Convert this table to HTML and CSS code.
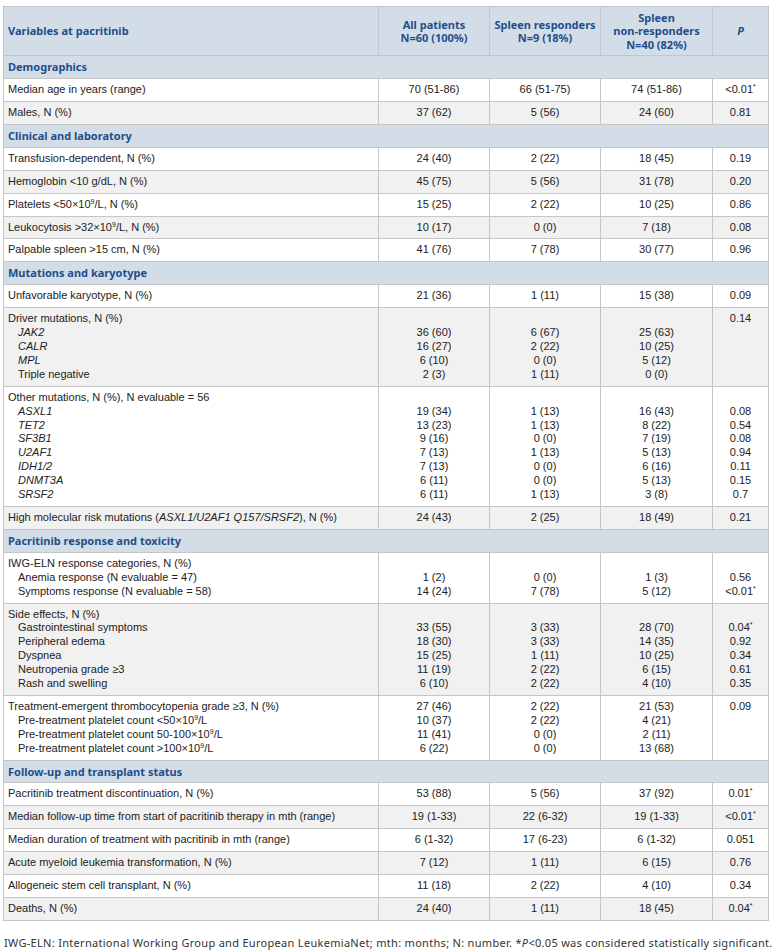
FILE: index.html
```html
<!DOCTYPE html>
<html>
<head>
<meta charset="utf-8">
<link rel="stylesheet" href="styles.css">
</head>
<body>
<div class="wrap">
<table class="tbl">
<colgroup>
<col class="c1"><col class="c2"><col class="c3"><col class="c4"><col class="c5">
</colgroup>
<thead>
<tr>
<th class="lft">Variables at pacritinib</th>
<th>All patients<br>N=60 (100%)</th>
<th>Spleen responders<br>N=9 (18%)</th>
<th>Spleen<br>non-responders<br>N=40 (82%)</th>
<th><i>P</i></th>
</tr>
</thead>
<tbody>
<tr class="sec"><td colspan="5">Demographics</td></tr>
<tr><td>Median age in years (range)</td><td>70 (51-86)</td><td>66 (51-75)</td><td>74 (51-86)</td><td>&lt;0.01<sup>*</sup></td></tr>
<tr><td>Males, N (%)</td><td>37 (62)</td><td>5 (56)</td><td>24 (60)</td><td>0.81</td></tr>
</tbody>
<tbody>
<tr class="sec"><td colspan="5">Clinical and laboratory</td></tr>
<tr><td>Transfusion-dependent, N (%)</td><td>24 (40)</td><td>2 (22)</td><td>18 (45)</td><td>0.19</td></tr>
<tr><td>Hemoglobin &lt;10 g/dL, N (%)</td><td>45 (75)</td><td>5 (56)</td><td>31 (78)</td><td>0.20</td></tr>
<tr><td>Platelets &lt;50×10<sup>9</sup>/L, N (%)</td><td>15 (25)</td><td>2 (22)</td><td>10 (25)</td><td>0.86</td></tr>
<tr><td>Leukocytosis &gt;32×10<sup>9</sup>/L, N (%)</td><td>10 (17)</td><td>0 (0)</td><td>7 (18)</td><td>0.08</td></tr>
<tr><td>Palpable spleen &gt;15 cm, N (%)</td><td>41 (76)</td><td>7 (78)</td><td>30 (77)</td><td>0.96</td></tr>
</tbody>
<tbody>
<tr class="sec"><td colspan="5">Mutations and karyotype</td></tr>
<tr><td>Unfavorable karyotype, N (%)</td><td>21 (36)</td><td>1 (11)</td><td>15 (38)</td><td>0.09</td></tr>
<tr class="multi"><td>Driver mutations, N (%)<br><span class="sub"><i>JAK2</i></span><br><span class="sub"><i>CALR</i></span><br><span class="sub"><i>MPL</i></span><br><span class="sub">Triple negative</span></td><td><br>36 (60)<br>16 (27)<br>6 (10)<br>2 (3)</td><td><br>6 (67)<br>2 (22)<br>0 (0)<br>1 (11)</td><td><br>25 (63)<br>10 (25)<br>5 (12)<br>0 (0)</td><td>0.14</td></tr>
<tr class="multi"><td>Other mutations, N (%), N evaluable = 56<br><span class="sub"><i>ASXL1</i></span><br><span class="sub"><i>TET2</i></span><br><span class="sub"><i>SF3B1</i></span><br><span class="sub"><i>U2AF1</i></span><br><span class="sub"><i>IDH1/2</i></span><br><span class="sub"><i>DNMT3A</i></span><br><span class="sub"><i>SRSF2</i></span></td><td><br>19 (34)<br>13 (23)<br>9 (16)<br>7 (13)<br>7 (13)<br>6 (11)<br>6 (11)</td><td><br>1 (13)<br>1 (13)<br>0 (0)<br>1 (13)<br>0 (0)<br>0 (0)<br>1 (13)</td><td><br>16 (43)<br>8 (22)<br>7 (19)<br>5 (13)<br>6 (16)<br>5 (13)<br>3 (8)</td><td><br>0.08<br>0.54<br>0.08<br>0.94<br>0.11<br>0.15<br>0.7</td></tr>
<tr><td>High molecular risk mutations (<i>ASXL1/U2AF1 Q157/SRSF2</i>), N (%)</td><td>24 (43)</td><td>2 (25)</td><td>18 (49)</td><td>0.21</td></tr>
</tbody>
<tbody>
<tr class="sec"><td colspan="5">Pacritinib response and toxicity</td></tr>
<tr class="multi"><td>IWG-ELN response categories, N (%)<br><span class="sub">Anemia response (N evaluable = 47)</span><br><span class="sub">Symptoms response (N evaluable = 58)</span></td><td><br>1 (2)<br>14 (24)</td><td><br>0 (0)<br>7 (78)</td><td><br>1 (3)<br>5 (12)</td><td><br>0.56<br>&lt;0.01<sup>*</sup></td></tr>
<tr class="multi"><td>Side effects, N (%)<br><span class="sub">Gastrointestinal symptoms</span><br><span class="sub">Peripheral edema</span><br><span class="sub">Dyspnea</span><br><span class="sub">Neutropenia grade ≥3</span><br><span class="sub">Rash and swelling</span></td><td><br>33 (55)<br>18 (30)<br>15 (25)<br>11 (19)<br>6 (10)</td><td><br>3 (33)<br>3 (33)<br>1 (11)<br>2 (22)<br>2 (22)</td><td><br>28 (70)<br>14 (35)<br>10 (25)<br>6 (15)<br>4 (10)</td><td><br>0.04<sup>*</sup><br>0.92<br>0.34<br>0.61<br>0.35</td></tr>
<tr class="multi"><td>Treatment-emergent thrombocytopenia grade ≥3, N (%)<br><span class="sub">Pre-treatment platelet count &lt;50×10<sup>9</sup>/L</span><br><span class="sub">Pre-treatment platelet count 50-100×10<sup>9</sup>/L</span><br><span class="sub">Pre-treatment platelet count &gt;100×10<sup>9</sup>/L</span></td><td>27 (46)<br>10 (37)<br>11 (41)<br>6 (22)</td><td>2 (22)<br>2 (22)<br>0 (0)<br>0 (0)</td><td>21 (53)<br>4 (21)<br>2 (11)<br>13 (68)</td><td>0.09</td></tr>
</tbody>
<tbody>
<tr class="sec"><td colspan="5">Follow-up and transplant status</td></tr>
<tr><td>Pacritinib treatment discontinuation, N (%)</td><td>53 (88)</td><td>5 (56)</td><td>37 (92)</td><td>0.01<sup>*</sup></td></tr>
<tr><td>Median follow-up time from start of pacritinib therapy in mth (range)</td><td>19 (1-33)</td><td>22 (6-32)</td><td>19 (1-33)</td><td>&lt;0.01<sup>*</sup></td></tr>
<tr><td>Median duration of treatment with pacritinib in mth (range)</td><td>6 (1-32)</td><td>17 (6-23)</td><td>6 (1-32)</td><td>0.051</td></tr>
<tr><td>Acute myeloid leukemia transformation, N (%)</td><td>7 (12)</td><td>1 (11)</td><td>6 (15)</td><td>0.76</td></tr>
<tr><td>Allogeneic stem cell transplant, N (%)</td><td>11 (18)</td><td>2 (22)</td><td>4 (10)</td><td>0.34</td></tr>
<tr><td>Deaths, N (%)</td><td>24 (40)</td><td>1 (11)</td><td>18 (45)</td><td>0.04<sup>*</sup></td></tr>
</tbody>
</table>
<p class="note">IWG-ELN: International Working Group and European LeukemiaNet; mth: months; N: number. *<i>P</i>&lt;0.05 was considered statistically significant.</p>
</div>
</body>
</html>
```
FILE: styles.css
```css
html, body {
  margin: 0;
  padding: 0;
  background: #ffffff;
}
.wrap {
  padding: 6px 8px 0 3px;
}
.tbl {
  width: 765px;
  table-layout: fixed;
  border-collapse: collapse;
  font-family: "Liberation Sans", Arial, sans-serif;
  font-size: 11px;
  line-height: 13.9px;
  color: #222222;
  border: 1px solid #a9a9a9;
}
.c1 { width: 375px; }
.c2 { width: 111px; }
.c3 { width: 111px; }
.c4 { width: 112px; }
.c5 { width: 56px; }
.tbl th, .tbl td {
  border: 1px solid #c6c6c6;
  padding: 4px 4px;
  text-align: center;
  vertical-align: top;
}
.tbl td:first-child {
  text-align: left;
}
.tbl thead th {
  background: #d3dde8;
  color: #1f4e8a;
  font-family: "Noto Sans", "Open Sans", sans-serif;
  font-weight: 700;
  font-size: 11px;
  line-height: 13.4px;
  vertical-align: middle;
  padding: 4px 4px;
  border-color: #c0c6cc;
}
.tbl thead th.lft {
  text-align: left;
}
.tbl tr.sec td {
  background: #d3dde8;
  color: #1f4e8a;
  font-family: "Noto Sans", "Open Sans", sans-serif;
  font-weight: 700;
  font-size: 11px;
}
.tbl tbody tr:nth-child(odd):not(.sec) td {
  background: #f1f1f1;
}
.sub {
  padding-left: 10px;
}
sup {
  font-size: 7px;
  line-height: 0;
  vertical-align: 4px;
}
.note {
  margin: 14px 0 0 1px;
  font-family: "Noto Sans", "Open Sans", sans-serif;
  font-size: 11px;
  letter-spacing: 0.3px;
  color: #333333;
  white-space: nowrap;
}
```
